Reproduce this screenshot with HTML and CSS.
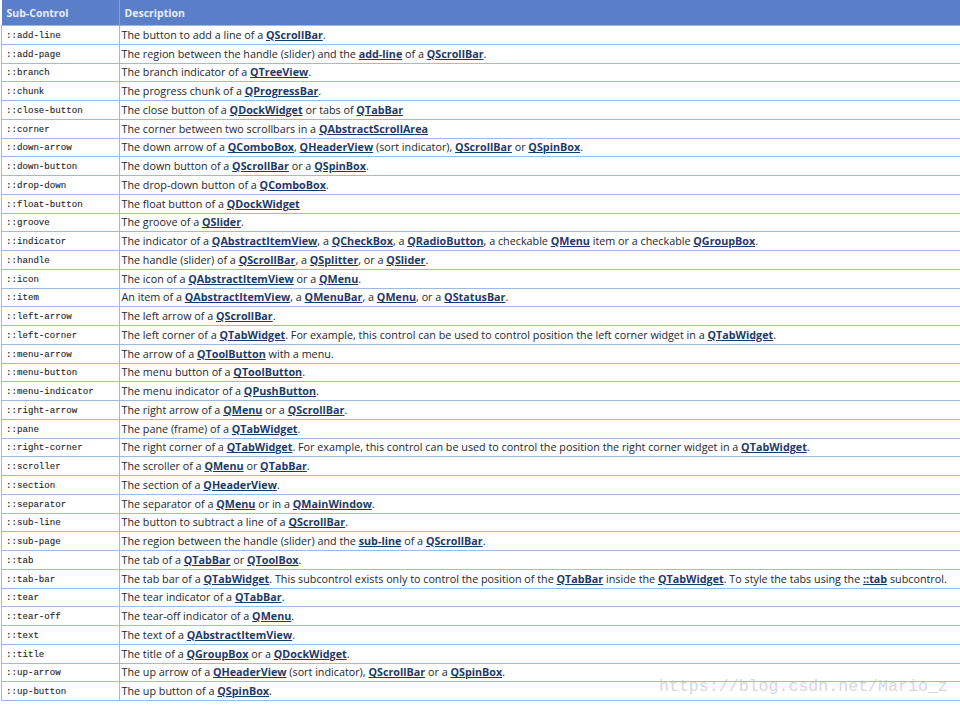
FILE: index.html
```html
<!DOCTYPE html>
<html lang="en">
<head>
<meta charset="utf-8">
<title>Sub-Controls</title>
<link rel="stylesheet" href="styles.css">
</head>
<body>
<table class="ref">
<thead><tr><th class="c1">Sub-Control</th><th>Description</th></tr></thead>
<tbody>
<tr><td><code>::add-line</code></td><td>The button to add a line of a <a>QScrollBar</a>.</td></tr>
<tr><td><code>::add-page</code></td><td>The region between the handle (slider) and the <a>add-line</a> of a <a>QScrollBar</a>.</td></tr>
<tr><td><code>::branch</code></td><td>The branch indicator of a <a>QTreeView</a>.</td></tr>
<tr><td><code>::chunk</code></td><td>The progress chunk of a <a>QProgressBar</a>.</td></tr>
<tr><td><code>::close-button</code></td><td>The close button of a <a>QDockWidget</a> or tabs of <a>QTabBar</a></td></tr>
<tr><td><code>::corner</code></td><td>The corner between two scrollbars in a <a>QAbstractScrollArea</a></td></tr>
<tr><td><code>::down-arrow</code></td><td>The down arrow of a <a>QComboBox</a>, <a>QHeaderView</a> (sort indicator), <a>QScrollBar</a> or <a>QSpinBox</a>.</td></tr>
<tr><td><code>::down-button</code></td><td>The down button of a <a>QScrollBar</a> or a <a>QSpinBox</a>.</td></tr>
<tr><td><code>::drop-down</code></td><td>The drop-down button of a <a>QComboBox</a>.</td></tr>
<tr><td><code>::float-button</code></td><td>The float button of a <a>QDockWidget</a></td></tr>
<tr><td><code>::groove</code></td><td>The groove of a <a>QSlider</a>.</td></tr>
<tr><td><code>::indicator</code></td><td>The indicator of a <a>QAbstractItemView</a>, a <a>QCheckBox</a>, a <a>QRadioButton</a>, a checkable <a>QMenu</a> item or a checkable <a>QGroupBox</a>.</td></tr>
<tr><td><code>::handle</code></td><td>The handle (slider) of a <a>QScrollBar</a>, a <a>QSplitter</a>, or a <a>QSlider</a>.</td></tr>
<tr><td><code>::icon</code></td><td>The icon of a <a>QAbstractItemView</a> or a <a>QMenu</a>.</td></tr>
<tr><td><code>::item</code></td><td>An item of a <a>QAbstractItemView</a>, a <a>QMenuBar</a>, a <a>QMenu</a>, or a <a>QStatusBar</a>.</td></tr>
<tr><td><code>::left-arrow</code></td><td>The left arrow of a <a>QScrollBar</a>.</td></tr>
<tr><td><code>::left-corner</code></td><td>The left corner of a <a>QTabWidget</a>. For example, this control can be used to control position the left corner widget in a <a>QTabWidget</a>.</td></tr>
<tr><td><code>::menu-arrow</code></td><td>The arrow of a <a>QToolButton</a> with a menu.</td></tr>
<tr><td><code>::menu-button</code></td><td>The menu button of a <a>QToolButton</a>.</td></tr>
<tr><td><code>::menu-indicator</code></td><td>The menu indicator of a <a>QPushButton</a>.</td></tr>
<tr><td><code>::right-arrow</code></td><td>The right arrow of a <a>QMenu</a> or a <a>QScrollBar</a>.</td></tr>
<tr><td><code>::pane</code></td><td>The pane (frame) of a <a>QTabWidget</a>.</td></tr>
<tr><td><code>::right-corner</code></td><td>The right corner of a <a>QTabWidget</a>. For example, this control can be used to control the position the right corner widget in a <a>QTabWidget</a>.</td></tr>
<tr><td><code>::scroller</code></td><td>The scroller of a <a>QMenu</a> or <a>QTabBar</a>.</td></tr>
<tr><td><code>::section</code></td><td>The section of a <a>QHeaderView</a>.</td></tr>
<tr><td><code>::separator</code></td><td>The separator of a <a>QMenu</a> or in a <a>QMainWindow</a>.</td></tr>
<tr><td><code>::sub-line</code></td><td>The button to subtract a line of a <a>QScrollBar</a>.</td></tr>
<tr><td><code>::sub-page</code></td><td>The region between the handle (slider) and the <a>sub-line</a> of a <a>QScrollBar</a>.</td></tr>
<tr><td><code>::tab</code></td><td>The tab of a <a>QTabBar</a> or <a>QToolBox</a>.</td></tr>
<tr><td><code>::tab-bar</code></td><td>The tab bar of a <a>QTabWidget</a>. This subcontrol exists only to control the position of the <a>QTabBar</a> inside the <a>QTabWidget</a>. To style the tabs using the <a>::tab</a> subcontrol.</td></tr>
<tr><td><code>::tear</code></td><td>The tear indicator of a <a>QTabBar</a>.</td></tr>
<tr><td><code>::tear-off</code></td><td>The tear-off indicator of a <a>QMenu</a>.</td></tr>
<tr><td><code>::text</code></td><td>The text of a <a>QAbstractItemView</a>.</td></tr>
<tr><td><code>::title</code></td><td>The title of a <a>QGroupBox</a> or a <a>QDockWidget</a>.</td></tr>
<tr><td><code>::up-arrow</code></td><td>The up arrow of a <a>QHeaderView</a> (sort indicator), <a>QScrollBar</a> or a <a>QSpinBox</a>.</td></tr>
<tr><td><code>::up-button</code></td><td>The up button of a <a>QSpinBox</a>.</td></tr>
</tbody>
</table>
<div class="mark">https://blog.csdn.net/Mario_z</div>
</body>
</html>
```
FILE: styles.css
```css
html, body { margin: 0; padding: 0; background: #fff; }
body { width: 960px; height: 705px; overflow: hidden; position: relative; font-family: "DejaVu Sans", Verdana, sans-serif; }
.ref { border-collapse: collapse; table-layout: fixed; width: 962px; margin-left: 1px; height: 701px; font-size: 10px; color: #22262c; }
.ref th { background: #5a7fc8; color: #e8eefa; font-family: "Open Sans", sans-serif; font-weight: 700; font-size: 10.5px; text-align: left; padding: 0 4px 0 5px; height: 25px; border-right: 1px solid #84a4d8; }
.ref th.c1 { width: 108px; }
.ref td { border: 1px solid #9dbbe0; padding: 0 0 0 2px; white-space: nowrap; overflow: visible; height: 17.7px; font-family: "Open Sans", sans-serif; font-size: 10.78px; line-height: 14px; }
.ref td:first-child { padding-left: 4px; }
.ref code { font-family: "Liberation Mono", monospace; font-size: 9.15px; font-weight: 400; color: #1c1c1c; -webkit-text-stroke: 0.1px #1c1c1c; }
.ref a { color: #1d3a66; font-weight: 700; text-decoration: underline; }
.mark { position: absolute; left: 659px; top: 677px; font-family: "Liberation Mono", monospace; font-size: 16.6px; color: #b8b8b8; opacity: .55; white-space: nowrap; }
```
